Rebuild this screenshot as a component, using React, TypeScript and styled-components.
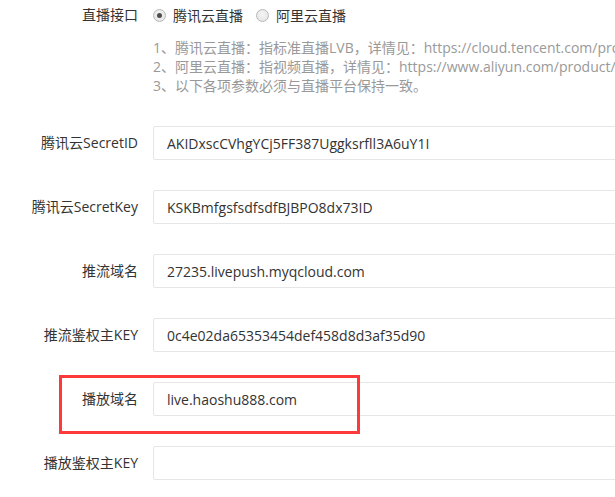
import React from "react";
import styled, { createGlobalStyle } from "styled-components";

const Global = createGlobalStyle`
  html, body {
    margin: 0;
    padding: 0;
    background: #ffffff;
    overflow: hidden;
  }
  body {
    font-family: "Open Sans", "Noto Sans CJK SC", sans-serif;
    font-size: 14px;
    color: #333333;
  }
`;

const Page = styled.div`
  width: 615px;
  height: 497px;
  overflow: hidden;
`;

const Form = styled.form`
  display: flex;
  flex-direction: column;
`;

const Row = styled.div<{ $height?: number; $gap?: number }>`
  position: relative;
  display: flex;
  align-items: center;
  height: ${(p) => p.$height ?? 34}px;
  margin-bottom: ${(p) => p.$gap ?? 30}px;
  white-space: nowrap;
`;

const Label = styled.label`
  flex: 0 0 138px;
  text-align: right;
  padding-right: 15px;
  box-sizing: content-box;
  color: #333333;
  font-size: 14px;
  line-height: 20px;
`;

const RadioGroup = styled.div`
  display: flex;
  align-items: center;
  gap: 0;
`;

const RadioOption = styled.span`
  display: inline-flex;
  align-items: center;
  margin-right: 13px;
  font-size: 14px;
  color: #333333;
`;

const RadioCircle = styled.span<{ $checked?: boolean }>`
  position: relative;
  box-sizing: border-box;
  width: 13px;
  height: 13px;
  border-radius: 50%;
  border: 1px solid #b8b8b8;
  background: radial-gradient(circle at 50% 40%, #f4f4f4 0%, #e2e2e2 100%);
  margin-right: 7px;
  &::after {
    content: "";
    display: ${(p) => (p.$checked ? "block" : "none")};
    position: absolute;
    left: 50%;
    top: 50%;
    width: 5px;
    height: 5px;
    margin: -2.5px 0 0 -2.5px;
    border-radius: 50%;
    background: #4d4d4d;
  }
`;

const Help = styled.div`
  margin-left: 153px;
  margin-top: 8px;
  margin-bottom: 31px;
  color: #999999;
  font-size: 14px;
  line-height: 19px;
  white-space: nowrap;
`;

const HelpLine = styled.div``;

const Input = styled.input`
  box-sizing: border-box;
  width: 520px;
  height: 34px;
  flex: 0 0 auto;
  border: 1px solid #e6e6e6;
  border-radius: 2px;
  padding: 0 13px;
  font-family: "Open Sans", "Noto Sans CJK SC", sans-serif;
  font-size: 14px;
  color: #333333;
  background: #ffffff;
  outline: none;
`;

const Highlight = styled.div`
  position: absolute;
  left: 59px;
  top: -7px;
  width: 301px;
  height: 59px;
  box-sizing: border-box;
  border: 3px solid #fd3a3a;
  pointer-events: none;
`;

const fields: { label: string; value: string; highlight?: boolean }[] = [
  { label: "腾讯云SecretID", value: "AKIDxscCVhgYCj5FF387Uggksrfll3A6uY1I" },
  { label: "腾讯云SecretKey", value: "KSKBmfgsfsdfsdfBJBPO8dx73ID" },
  { label: "推流域名", value: "27235.livepush.myqcloud.com" },
  { label: "推流鉴权主KEY", value: "0c4e02da65353454def458d8d3af35d90" },
  { label: "播放域名", value: "live.haoshu888.com", highlight: true },
  { label: "播放鉴权主KEY", value: "" },
];

export default function App() {
  return (
    <Page>
      <Global />
      <Form onSubmit={(e) => e.preventDefault()}>
        <Row $height={30} $gap={0}>
          <Label>直播接口</Label>
          <RadioGroup>
            <RadioOption>
              <RadioCircle $checked />
              腾讯云直播
            </RadioOption>
            <RadioOption>
              <RadioCircle />
              阿里云直播
            </RadioOption>
          </RadioGroup>
        </Row>
        <Help>
          <HelpLine>1、腾讯云直播：指标准直播LVB，详情见：https://cloud.tencent.com/product/lvb</HelpLine>
          <HelpLine>2、阿里云直播：指视频直播，详情见：https://www.aliyun.com/product/live</HelpLine>
          <HelpLine>3、以下各项参数必须与直播平台保持一致。</HelpLine>
        </Help>
        {fields.map((f) => (
          <Row key={f.label}>
            {f.highlight && <Highlight />}
            <Label>{f.label}</Label>
            <Input readOnly value={f.value} />
          </Row>
        ))}
      </Form>
    </Page>
  );
}
